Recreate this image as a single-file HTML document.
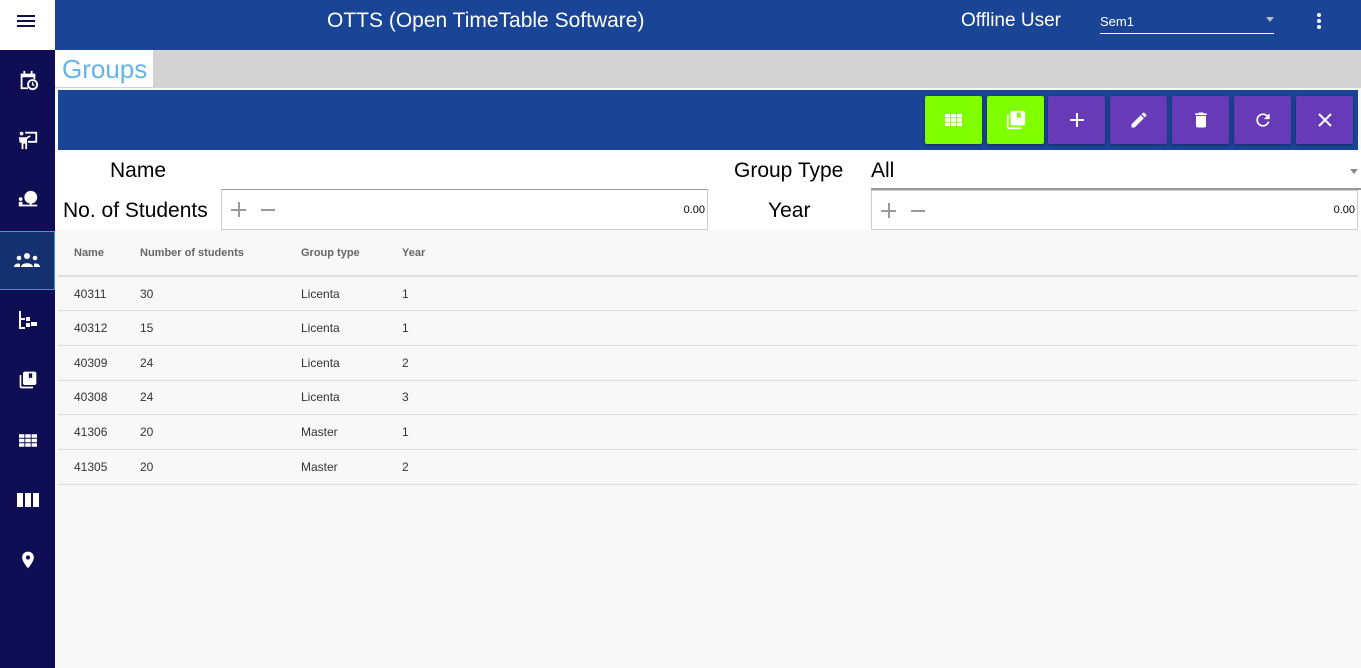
<!DOCTYPE html><html><head><style>
*{margin:0;padding:0;box-sizing:border-box}
body{width:1361px;height:668px;overflow:hidden;font-family:"Liberation Sans",sans-serif;background:#f8f8f8;position:relative}
.a{position:absolute}
.sb{left:0;top:50px;width:55px;height:618px;background:#0f0e55}
.ic{position:absolute;left:0;width:55px;height:60px;display:flex;align-items:center;justify-content:center}
.btn{position:absolute;top:96px;width:57px;height:48px;border-radius:2px;display:flex;align-items:center;justify-content:center;box-shadow:0 1px 3px rgba(0,0,0,.4)}
.g{background:#80ff00}.p{background:#673ab7}
td,th{font-size:12px;color:#333;text-align:left;padding-left:16px;height:34.7px;border-bottom:1px solid #ddd}
th{font-size:11px;color:#666;font-weight:bold;height:46px;border-bottom:2px solid #ddd}
table{border-collapse:collapse;position:absolute;left:58px;top:230px;width:1300px}
.lb{font-size:21px}
</style></head><body>
<div class="a" style="left:0;top:0;width:55px;height:50px;background:#fff"><div class="a" style="left:17px;top:15px;width:18px;height:2px;background:#0f0e55;box-shadow:0 5px 0 #0f0e55,0 10px 0 #0f0e55"></div></div>
<div class="a sb">
<div class="ic" style="top:0"><svg width="22" height="22" viewBox="0 0 24 24" fill="#fff"><path d="M4 5h16v6h-2V9H6v11h6v2H4zM7 2h2v3H7zM15 2h2v3h-2z"/><circle cx="17" cy="17" r="5" fill="none" stroke="#fff" stroke-width="2"/><path d="M17 14v3l2 1" stroke="#fff" stroke-width="1.5" fill="none"/></svg></div>
<div class="ic" style="top:60px"><svg width="22" height="22" viewBox="0 0 24 24" fill="#fff"><circle cx="5" cy="5" r="2"/><path d="M2 9h8l4-2 1 1-4 3v11H9v-6H7v6H5v-7H3z"/><path d="M9 3h13v12H12v-2h8V5H9z"/></svg></div>
<div class="ic" style="top:120px"><svg width="22" height="22" viewBox="0 0 24 24" fill="#fff"><circle cx="15" cy="9" r="7"/><circle cx="4" cy="11" r="2"/><path d="M2 14h4v3h16v2H2zM14 15h2v3h-2z"/></svg></div>
<div class="ic" style="top:181px;height:59px;background:#14306e;border:1px solid #29a3e0;border-left:none"><svg width="26" height="18" viewBox="0 0 26 18" fill="#fff"><circle cx="13" cy="4" r="3"/><circle cx="5" cy="6" r="2.3"/><circle cx="21" cy="6" r="2.3"/><path d="M7 15c0-5 12-5 12 0zM0 15c0-4 6-4 6-3v3zM26 15c0-4-6-4-6-3v3z"/></svg></div>
<div class="ic" style="top:240px"><svg width="20" height="20" viewBox="0 0 20 20" fill="#fff"><path d="M1 1h2v16h4v2H1zM3 8h4v2H3zM8 7h4v4H8zM13 12h6v4h-6zM8 13h4v4H8z"/></svg></div>
<div class="ic" style="top:300px"><svg width="20" height="20" viewBox="0 0 24 24" fill="#fff"><path d="M4 6H2v14c0 1 1 2 2 2h14v-2H4z"/><path d="M20 2H8c-1 0-2 1-2 2v12c0 1 1 2 2 2h12c1 0 2-1 2-2V4c0-1-1-2-2-2zm-3 8-2-1-2 1V4h4z"/></svg></div>
<div class="ic" style="top:360px"><svg width="18" height="13" viewBox="0 0 20 14" fill="#fff"><path d="M0 0h6v4H0zM7 0h6v4H7zM14 0h6v4h-6zM0 5h6v4H0zM7 5h6v4H7zM14 5h6v4h-6zM0 10h6v4H0zM7 10h6v4H7zM14 10h6v4h-6z"/></svg></div>
<div class="ic" style="top:420px"><svg width="22" height="14" viewBox="0 0 22 14" fill="#fff"><path d="M0 0h6v14H0zM8 0h6v14H8zM16 0h6v14h-6z"/></svg></div>
<div class="ic" style="top:480px"><svg width="20" height="26" viewBox="0 0 24 24" fill="#fff"><path d="M12 2C8 2 5 5 5 9c0 5 7 13 7 13s7-8 7-13c0-4-3-7-7-7zm0 9.5a2.5 2.5 0 1 1 0-5 2.5 2.5 0 0 1 0 5z"/></svg></div>
</div>
<div class="a" style="left:55px;top:0;width:1306px;height:50px;background:#1a4597;color:#fff">
<div class="a" style="left:272px;top:9px;font-size:21px">OTTS (Open TimeTable Software)</div>
<div class="a" style="left:906px;top:10px;font-size:19px">Offline User</div>
<div class="a" style="left:1045px;top:14px;font-size:13px;width:174px;height:20px;border-bottom:1px solid #fff">Sem1<span style="position:absolute;right:0;top:3px;border:4px solid transparent;border-top:5px solid #bbb"></span></div>
<div class="a" style="left:1262px;top:13px;width:4px;height:4px;background:#fff;border-radius:50%;box-shadow:0 6px 0 #fff,0 12px 0 #fff"></div>
</div>
<div class="a" style="left:55px;top:50px;width:1306px;height:38px;background:#d3d3d3"></div>
<div class="a" style="left:55px;top:50px;width:98px;height:37px;background:#fff;color:#64b5e6;font-size:26px;padding:4px 0 0 7px">Groups</div>
<div class="a" style="left:58px;top:90px;width:1300px;height:60px;background:#1a4597"></div>
<div class="btn g" style="left:925px"><svg width="17" height="12" viewBox="0 0 20 14" fill="#fff"><path d="M0 0h6v4H0zM7 0h6v4H7zM14 0h6v4h-6zM0 5h6v4H0zM7 5h6v4H7zM14 5h6v4h-6zM0 10h6v4H0zM7 10h6v4H7zM14 10h6v4h-6z"/></svg></div>
<div class="btn g" style="left:987px"><svg width="22" height="22" viewBox="0 0 24 24" fill="#fff"><path d="M4 6H2v14c0 1 1 2 2 2h14v-2H4z"/><path d="M20 2H8c-1 0-2 1-2 2v12c0 1 1 2 2 2h12c1 0 2-1 2-2V4c0-1-1-2-2-2zm-3 8-2-1-2 1V4h4z"/></svg></div>
<div class="btn p" style="left:1048px"><svg width="16" height="16" viewBox="0 0 16 16"><path d="M8 1v14M1 8h14" stroke="#fff" stroke-width="2"/></svg></div>
<div class="btn p" style="left:1110px"><svg width="20" height="20" viewBox="0 0 24 24" fill="#fff"><path d="M3 17.25V21h3.75L17.8 9.94l-3.75-3.75zM20.7 7.04a1 1 0 0 0 0-1.41l-2.34-2.34a1 1 0 0 0-1.41 0l-1.83 1.83 3.75 3.75z"/></svg></div>
<div class="btn p" style="left:1172px"><svg width="20" height="20" viewBox="0 0 24 24" fill="#fff"><path d="M6 19c0 1.1.9 2 2 2h8c1.1 0 2-.9 2-2V7H6zM19 4h-3.5l-1-1h-5l-1 1H5v2h14z"/></svg></div>
<div class="btn p" style="left:1234px"><svg width="20" height="20" viewBox="0 0 24 24" fill="#fff"><path d="M17.65 6.35A7.96 7.96 0 0 0 12 4a8 8 0 1 0 7.73 10h-2.08A6 6 0 1 1 12 6c1.66 0 3.14.69 4.22 1.78L13 11h7V4z"/></svg></div>
<div class="btn p" style="left:1296px"><svg width="16" height="16" viewBox="0 0 16 16"><path d="M2 2l12 12M14 2L2 14" stroke="#fff" stroke-width="2"/></svg></div>
<div class="a" style="left:55px;top:150px;width:1306px;height:80px;background:#fff"></div>
<div class="a lb" style="left:110px;top:159px">Name</div>
<div class="a lb" style="left:734px;top:159px">Group Type</div>
<div class="a lb" style="left:871px;top:159px">All</div>
<div class="a" style="left:1350px;top:169px;border:4px solid transparent;border-top:5px solid #888"></div>
<div class="a" style="left:871px;top:188px;width:490px;height:2px;background:#999"></div>
<div class="a lb" style="left:63px;top:199px">No. of Students</div>
<div class="a lb" style="left:768px;top:199px">Year</div>
<div class="a" style="left:221px;top:189px;width:487px;height:41px;border:1px solid #ccc;border-top:1px solid #999"><span style="position:absolute;left:9px;top:19px;width:15px;height:2px;background:#999"></span><span style="position:absolute;left:16px;top:12px;width:2px;height:15px;background:#999"></span><span style="position:absolute;left:39px;top:19px;width:14px;height:2px;background:#999"></span><span style="position:absolute;right:2px;top:14px;font-size:11px">0.00</span></div>
<div class="a" style="left:871px;top:190px;width:487px;height:40px;border:1px solid #ccc"><span style="position:absolute;left:9px;top:19px;width:15px;height:2px;background:#999"></span><span style="position:absolute;left:16px;top:12px;width:2px;height:15px;background:#999"></span><span style="position:absolute;left:39px;top:19px;width:14px;height:2px;background:#999"></span><span style="position:absolute;right:2px;top:13px;font-size:11px">0.00</span></div>
<table><tr><th style="width:66px">Name</th><th style="width:161px">Number of students</th><th style="width:101px">Group type</th><th>Year</th></tr>
<tr><td>40311</td><td>30</td><td>Licenta</td><td>1</td></tr>
<tr><td>40312</td><td>15</td><td>Licenta</td><td>1</td></tr>
<tr><td>40309</td><td>24</td><td>Licenta</td><td>2</td></tr>
<tr><td>40308</td><td>24</td><td>Licenta</td><td>3</td></tr>
<tr><td>41306</td><td>20</td><td>Master</td><td>1</td></tr>
<tr><td>41305</td><td>20</td><td>Master</td><td>2</td></tr></table>
</body></html>
